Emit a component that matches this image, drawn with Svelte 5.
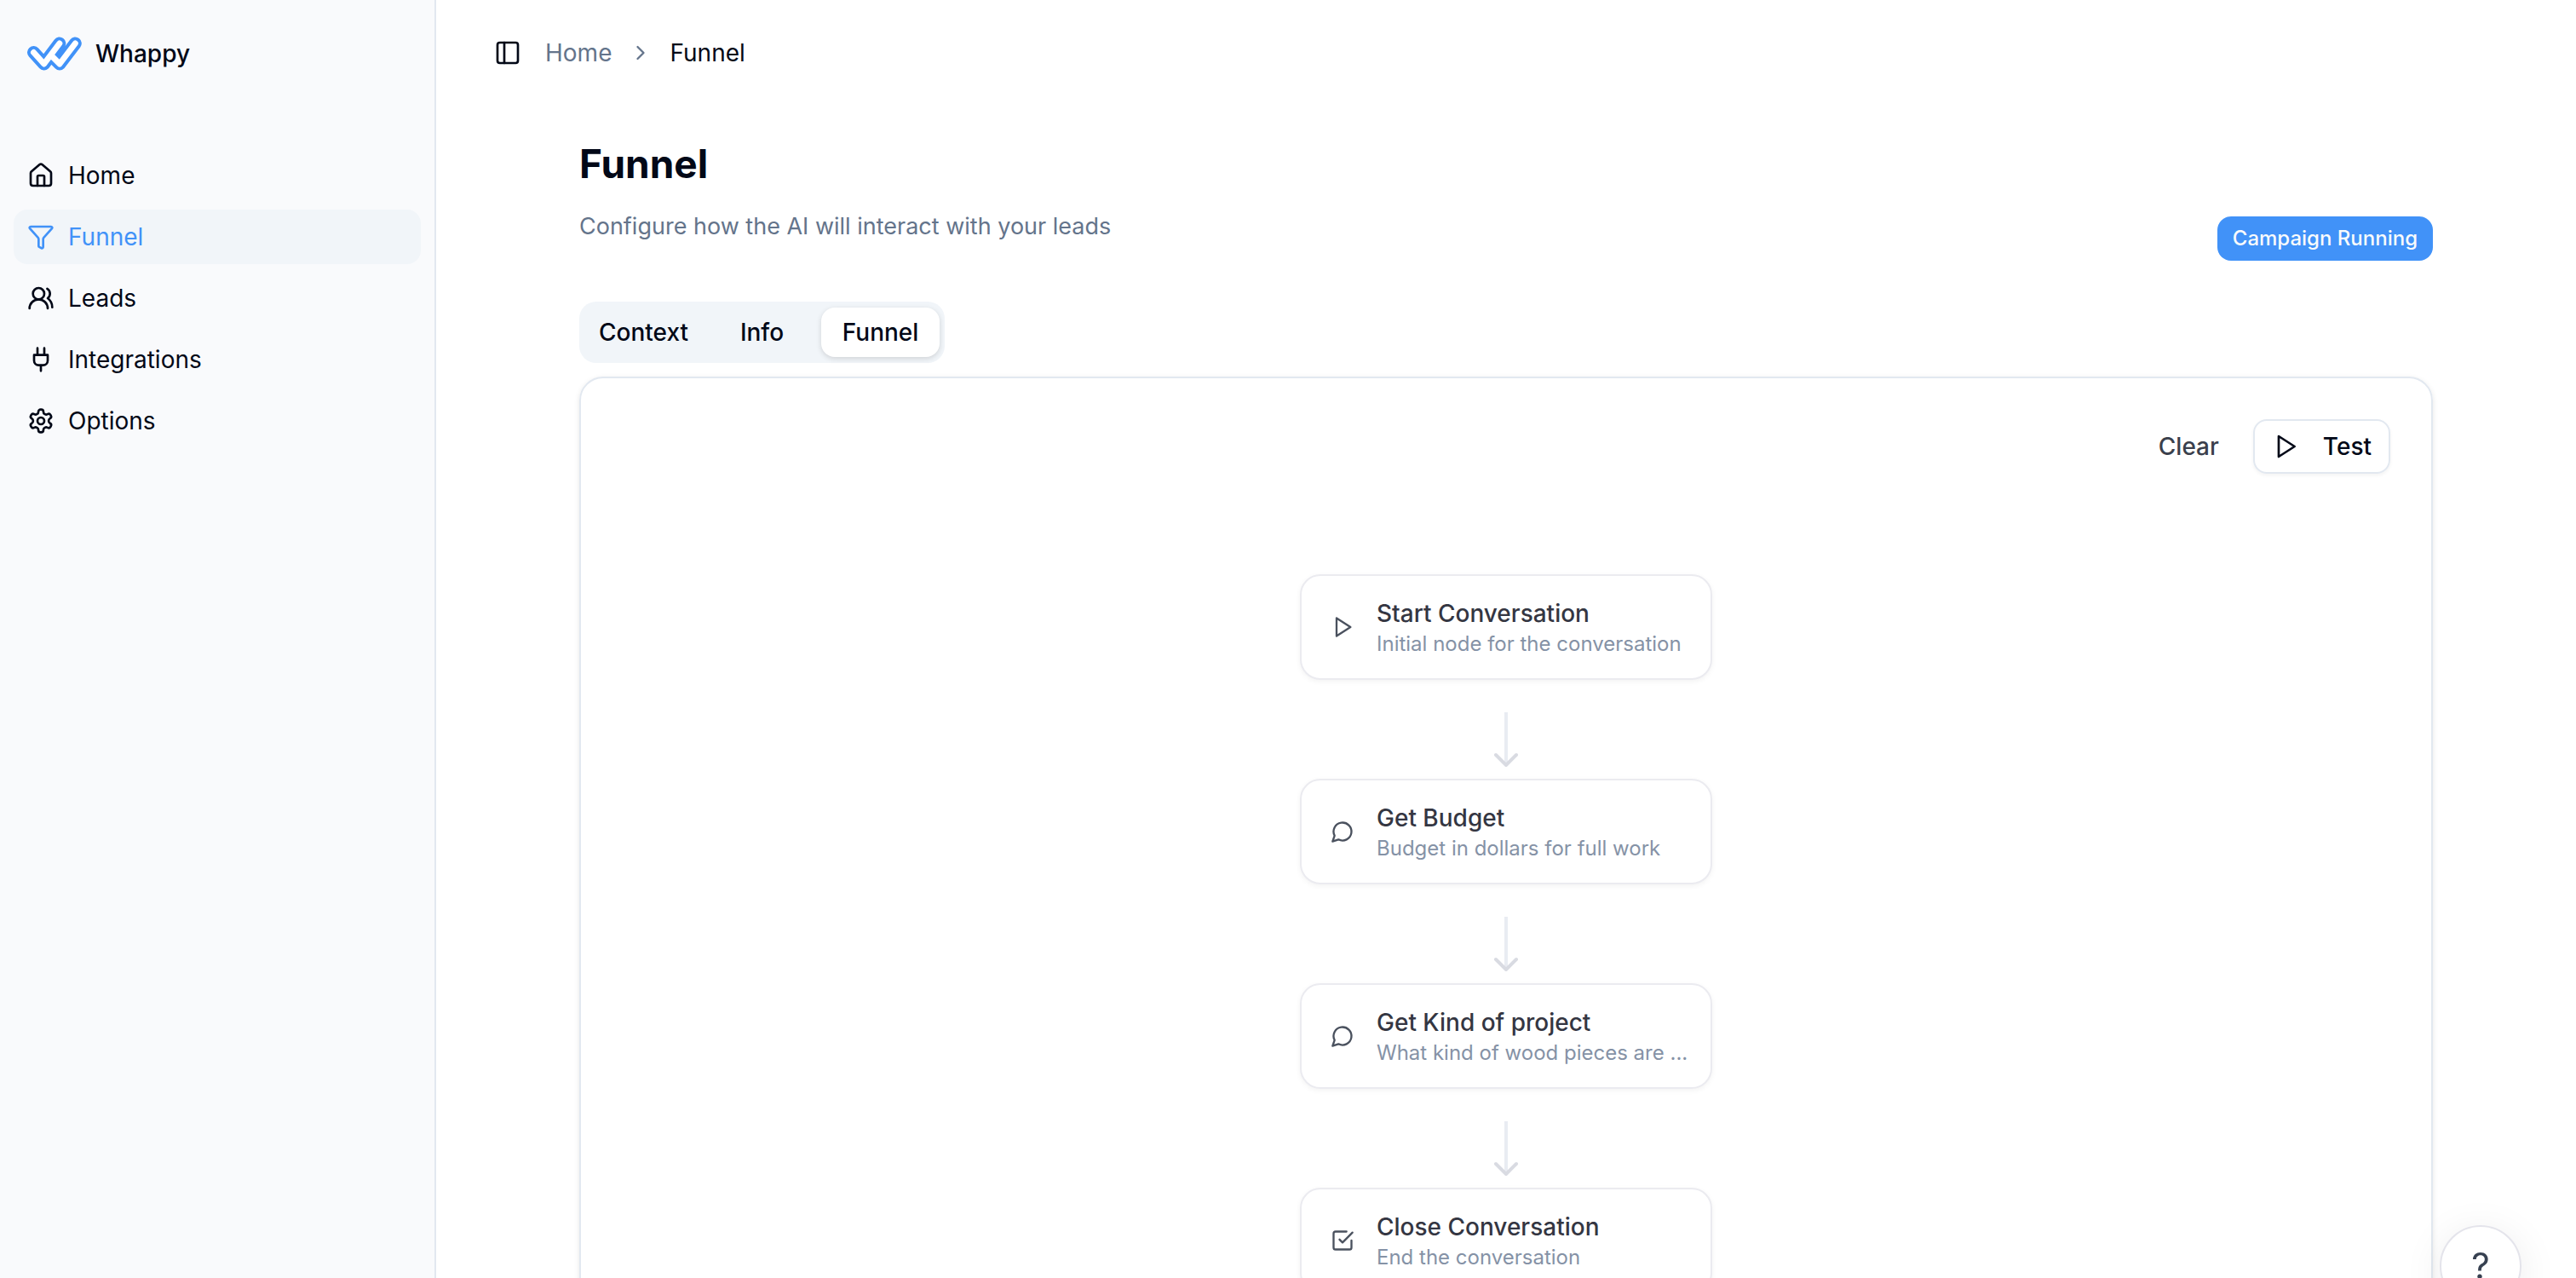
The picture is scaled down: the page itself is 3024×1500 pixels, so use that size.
<script lang="ts">
	type Icon = 'home' | 'funnel' | 'users' | 'plug' | 'settings' | 'panel' | 'chevron' | 'play' | 'message' | 'check';

	const links: { label: string; icon: Icon }[] = [
		{ label: 'Home', icon: 'home' },
		{ label: 'Funnel', icon: 'funnel' },
		{ label: 'Leads', icon: 'users' },
		{ label: 'Integrations', icon: 'plug' },
		{ label: 'Options', icon: 'settings' }
	];
	const tabs = ['Context', 'Info', 'Funnel'];
	const steps: { title: string; text: string; icon: Icon }[] = [
		{ title: 'Start Conversation', text: 'Initial node for the conversation', icon: 'play' },
		{ title: 'Get Budget', text: 'Budget in dollars for full work', icon: 'message' },
		{ title: 'Get Kind of project', text: 'What kind of wood pieces are ...', icon: 'message' },
		{ title: 'Close Conversation', text: 'End the conversation', icon: 'check' }
	];

	let page = $state('Funnel');
	let tab = $state('Funnel');
	let open = $state(true);
</script>

{#snippet icon(name: Icon)}
	<svg class="icon" viewBox="0 0 24 24" aria-hidden="true">
		{#if name === 'home'}
			<path d="M15 21v-8a1 1 0 0 0-1-1h-4a1 1 0 0 0-1 1v8" />
			<path d="M3 10a2 2 0 0 1 .709-1.528l7-5.999a2 2 0 0 1 2.582 0l7 5.999A2 2 0 0 1 21 10v9a2 2 0 0 1-2 2H5a2 2 0 0 1-2-2z" />
		{:else if name === 'funnel'}
			<path d="M10 20a1 1 0 0 0 .553.895l2 1A1 1 0 0 0 14 21v-7a2 2 0 0 1 .517-1.341L21.74 4.67A1 1 0 0 0 21 3H3a1 1 0 0 0-.742 1.67l7.225 7.989A2 2 0 0 1 10 14z" />
		{:else if name === 'users'}
			<path d="M18 21a8 8 0 0 0-16 0" />
			<circle cx="10" cy="8" r="5" />
			<path d="M22 20c0-3.37-2-6.5-4-8a5 5 0 0 0-.45-8.3" />
		{:else if name === 'plug'}
			<path d="M12 22v-5M9 8V2M15 8V2M18 8v5a4 4 0 0 1-4 4h-4a4 4 0 0 1-4-4V8Z" />
		{:else if name === 'settings'}
			<path d="M12.22 2h-.44a2 2 0 0 0-2 2v.18a2 2 0 0 1-1 1.73l-.43.25a2 2 0 0 1-2 0l-.15-.08a2 2 0 0 0-2.73.73l-.22.38a2 2 0 0 0 .73 2.73l.15.1a2 2 0 0 1 1 1.72v.51a2 2 0 0 1-1 1.74l-.15.09a2 2 0 0 0-.73 2.73l.22.38a2 2 0 0 0 2.73.73l.15-.08a2 2 0 0 1 2 0l.43.25a2 2 0 0 1 1 1.73V20a2 2 0 0 0 2 2h.44a2 2 0 0 0 2-2v-.18a2 2 0 0 1 1-1.73l.43-.25a2 2 0 0 1 2 0l.15.08a2 2 0 0 0 2.73-.73l.22-.39a2 2 0 0 0-.73-2.73l-.15-.08a2 2 0 0 1-1-1.74v-.5a2 2 0 0 1 1-1.74l.15-.09a2 2 0 0 0 .73-2.73l-.22-.38a2 2 0 0 0-2.73-.73l-.15.08a2 2 0 0 1-2 0l-.43-.25a2 2 0 0 1-1-1.73V4a2 2 0 0 0-2-2z" />
			<circle cx="12" cy="12" r="3" />
		{:else if name === 'panel'}
			<rect width="18" height="18" x="3" y="3" rx="2" />
			<path d="M9 3v18" />
		{:else if name === 'chevron'}
			<path d="m9 18 6-6-6-6" />
		{:else if name === 'play'}
			<path d="m6 3 14 9-14 9z" />
		{:else if name === 'message'}
			<path d="M7.9 20A9 9 0 1 0 4 16.1L2 22Z" />
		{:else}
			<path d="m9 11 3 3L22 4" />
			<path d="M21 12v7a2 2 0 0 1-2 2H5a2 2 0 0 1-2-2V5a2 2 0 0 1 2-2h11" />
		{/if}
	</svg>
{/snippet}

<div class="app">
	{#if open}
		<aside>
			<a class="brand" href="#home">
				<svg class="logo" viewBox="0 0 64 40" aria-hidden="true">
					<path class="outline" d="M7.5 18.5 19.7 32 37.8 8M28.5 22.5l9.5 9.5L56.3 8" />
					<path class="inner" d="M7.5 18.5 19.7 32 37.8 8M28.5 22.5l9.5 9.5L56.3 8" />
				</svg>
				Whappy
			</a>
			<nav>
				{#each links as link}
					<a href="#{link.label.toLowerCase()}" class:active={page === link.label} onclick={() => (page = link.label)}>
						{@render icon(link.icon)}
						{link.label}
					</a>
				{/each}
			</nav>
		</aside>
	{/if}

	<div class="page">
		<header>
			<button class="toggle" aria-label="Toggle sidebar" onclick={() => (open = !open)}>{@render icon('panel')}</button>
			<a href="#home">Home</a>
			<span class="sep">{@render icon('chevron')}</span>
			<span>Funnel</span>
		</header>

		<main>
			<h1>Funnel</h1>
			<div class="intro">
				<p>Configure how the AI will interact with your leads</p>
				<span class="badge">Campaign Running</span>
			</div>

			<div class="tabs" role="tablist">
				{#each tabs as name}
					<button role="tab" aria-selected={tab === name} class:active={tab === name} onclick={() => (tab = name)}>{name}</button>
				{/each}
			</div>

			<section class="card">
				<div class="actions">
					<button class="clear">Clear</button>
					<button class="test">{@render icon('play')}Test</button>
				</div>
				<div class="flow">
					{#each steps as step, i}
						{#if i > 0}
							<svg class="arrow" viewBox="0 0 28 64" aria-hidden="true">
								<path class="line" d="M14 0v60" />
								<path class="head" d="m2 50 12 12 12-12" />
							</svg>
						{/if}
						<button class="node">
							<span class="node-icon">{@render icon(step.icon)}</span>
							<span class="node-text">
								<span class="title">{step.title}</span>
								<span class="text">{step.text}</span>
							</span>
						</button>
					{/each}
				</div>
			</section>
		</main>
	</div>

	<button class="help" aria-label="Help">?</button>
</div>

<style>
:global(body){
	margin: 0;
	background: #fff;
}
.app{
	display: flex;
	height: 100vh;
	overflow: hidden;
	font-family: Inter, "Liberation Sans", sans-serif;
	font-size: 28px;
	line-height: 40px;
	color: #020817;
}
button{
	font: inherit;
	color: inherit;
	background: none;
	border: 0;
	padding: 0;
	cursor: pointer;
}
a{
	color: inherit;
	text-decoration: none;
}
.icon{
	width: 32px;
	height: 32px;
	flex: none;
	fill: none;
	stroke: currentColor;
	stroke-width: 2;
	stroke-linecap: round;
	stroke-linejoin: round;
}
aside{
	flex: none;
	box-sizing: border-box;
	width: 512px;
	padding: 16px;
	background: #f9fafc;
	border-right: 2px solid #e2e8f0;
}
.brand{
	display: flex;
	align-items: center;
	gap: 16px;
	height: 94px;
	padding: 0 16px;
	font-weight: 500;
}
.logo{
	width: 64px;
	height: 40px;
	fill: none;
	stroke-linecap: round;
	stroke-linejoin: round;
}
.outline{
	stroke: #4192f8;
	stroke-width: 15;
}
.inner{
	stroke: #fff;
	stroke-width: 7;
}
nav{
	display: flex;
	flex-direction: column;
	gap: 8px;
	margin-top: 64px;
}
nav a{
	display: flex;
	align-items: center;
	gap: 16px;
	height: 64px;
	padding: 0 16px;
	border-radius: 16px;
}
nav a.active{
	background: #f1f5f9;
	color: #4192f8;
}
.page{
	flex: 1;
	min-width: 0;
}
header{
	display: flex;
	align-items: center;
	gap: 20px;
	height: 124px;
	padding: 0 68px;
}
header a{
	color: #64748b;
}
.toggle,
.sep{
	display: flex;
}
.toggle{
	margin-right: 8px;
}
.sep{
	color: #64748b;
}
.sep .icon{
	width: 28px;
	height: 28px;
}
main{
	padding: 36px 168px;
}
h1{
	margin: 0;
	font-size: 46px;
	line-height: 64px;
	font-weight: 700;
}
.intro{
	display: flex;
	justify-content: space-between;
	align-items: flex-end;
	margin-top: 22px;
}
p{
	margin: 0 0 20px;
	font-size: 27px;
	color: #64748b;
}
.badge{
	padding: 8px 18px;
	border-radius: 16px;
	background: #4192f8;
	color: #f8fafc;
	font-size: 24px;
	line-height: 36px;
	font-weight: 500;
}
.tabs{
	display: inline-grid;
	grid-template-columns: repeat(3, 1fr);
	margin-top: 48px;
	padding: 7px 6px;
	border-radius: 20px;
	background: #f1f5f9;
	vertical-align: top;
}
.tabs button{
	padding: 9px 17px;
	border-radius: 16px;
	font-weight: 500;
}
.tabs button.active{
	background: #fff;
	box-shadow: 0 2px 6px rgb(0 0 0 / .14);
}
.card{
	margin-top: 16px;
	padding: 48px;
	border: 2px solid #e2e8f0;
	border-radius: 28px;
	box-shadow: 0 2px 6px rgb(0 0 0 / .1);
}
.actions{
	display: flex;
	justify-content: flex-end;
	align-items: center;
	gap: 40px;
	font-weight: 500;
}
.clear{
	color: #3a3f4c;
	font-weight: 500;
}
.test{
	display: flex;
	align-items: center;
	gap: 28px;
	padding: 10px 20px;
	border: 2px solid #e2e8f0;
	border-radius: 16px;
	box-shadow: 0 2px 4px rgb(0 0 0 / .05);
}
.flow{
	display: flex;
	flex-direction: column;
	align-items: center;
	margin-top: 118px;
}
.node{
	display: flex;
	align-items: center;
	gap: 16px;
	box-sizing: border-box;
	width: 484px;
	padding: 24px;
	border: 2px solid #ebebf0;
	border-radius: 24px;
	background: #fff;
	box-shadow: 0 2px 6px rgb(0 0 0 / .05);
	text-align: left;
}
.node-icon{
	display: grid;
	place-items: center;
	width: 48px;
	color: #4a515e;
}
.node-icon .icon{
	width: 28px;
	height: 28px;
}
.node-text{
	flex: 1;
	min-width: 0;
}
.title,
.text{
	display: block;
}
.title{
	color: #343642;
	font-weight: 500;
}
.text{
	overflow: hidden;
	color: #8592a6;
	font-size: 24px;
	line-height: 32px;
	white-space: nowrap;
	text-overflow: ellipsis;
}
.arrow{
	width: 28px;
	height: 64px;
	margin: 38px 0 14px;
	fill: none;
	stroke-width: 4;
}
.line{
	stroke: #e9ecf2;
}
.head{
	stroke: #d9dbe2;
	stroke-linecap: round;
	stroke-linejoin: round;
}
.help{
	position: fixed;
	right: 64px;
	bottom: -34px;
	width: 96px;
	height: 96px;
	border: 2px solid #e4e4eb;
	border-radius: 50%;
	background: #fff;
	box-shadow: 0 8px 48px rgb(0 0 0 / .08);
	color: #374151;
	font-size: 42px;
}
</style>
